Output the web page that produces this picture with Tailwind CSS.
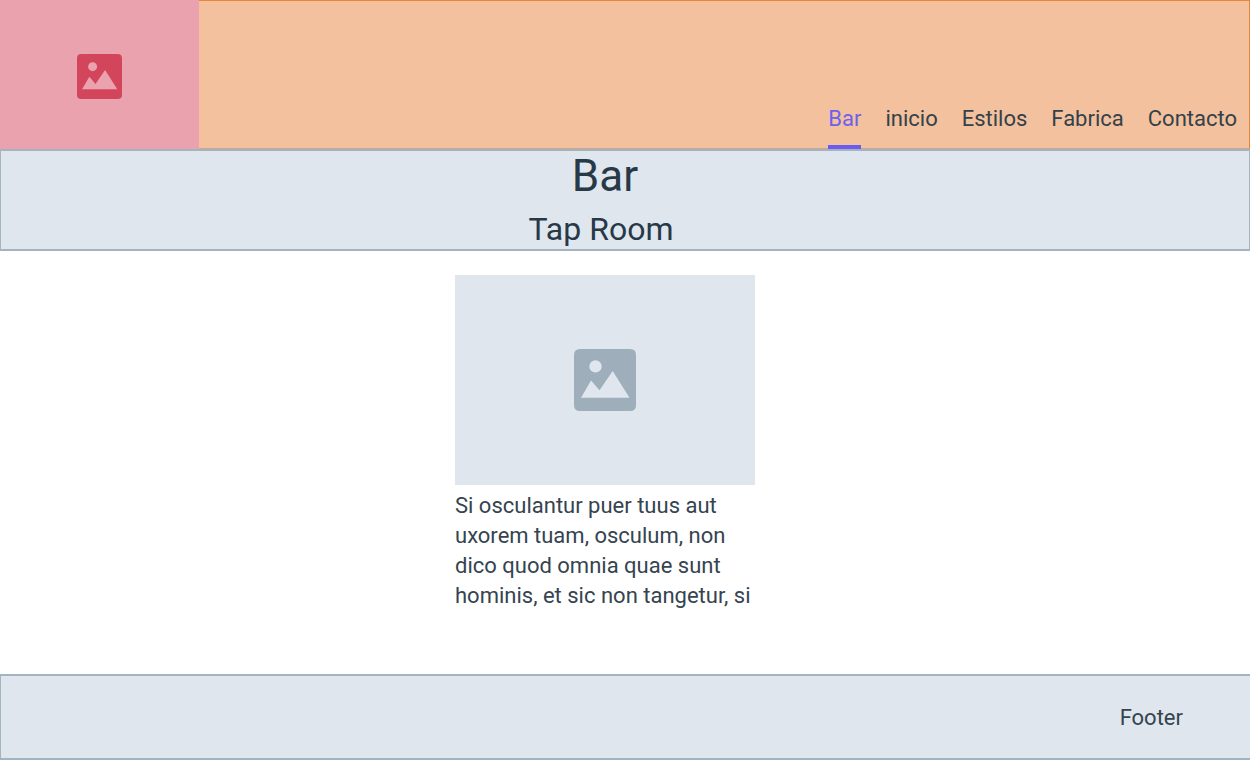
<!DOCTYPE html>
<html lang="es">
<head>
<meta charset="utf-8">
<meta name="viewport" content="width=device-width, initial-scale=1">
<title>Bar</title>
<script src="https://cdn.jsdelivr.net/npm/@tailwindcss/browser@4"></script>
</head>
<body class="flex min-h-screen flex-col bg-white font-['Roboto',sans-serif] text-[22px] leading-[30px] text-[#35444f]">
  <header class="flex h-[149px] bg-[#f3c19d]">
    <div class="flex w-[199px] shrink-0 items-center justify-center bg-[#e9a2ae] pt-1 text-[#d3455b]">
      <svg class="size-[45px]" viewBox="0 0 62 62" fill="currentColor" role="img" aria-label="Logo">
        <path fill-rule="evenodd" d="M6 0H56Q62 0 62 6V56Q62 62 56 62H6Q0 62 0 56V6Q0 0 6 0ZM21.500 11.200a6.200 6.200 0 1 0 0 12.400a6.200 6.200 0 1 0 0-12.400ZM7 48.700H55.500L38.700 22L25.500 41.300L17 31.500Z"/>
      </svg>
    </div>
    <nav class="flex flex-1 items-end justify-end gap-6 border-t border-r border-b border-t-[#ea8536] border-r-[#ea8536] border-b-[#d3a383] pr-3 text-[#33414a]">
      <a href="#bar" aria-current="page" class="-mb-px border-b-4 border-[#6a5bf3] pb-[11px] text-[#6f61ee]">Bar</a>
      <a href="#inicio" class="pb-3.5">inicio</a>
      <a href="#estilos" class="pb-3.5">Estilos</a>
      <a href="#fabrica" class="pb-3.5">Fabrica</a>
      <a href="#contacto" class="pb-3.5">Contacto</a>
    </nav>
  </header>
  <section class="flex h-[102px] flex-col items-center border-x border-y-2 border-[#a4b3c0] bg-[#dfe6ee] text-[#273947]">
    <h1 class="pr-10 text-[44px] leading-[50px]">Bar</h1>
    <p class="pr-12 text-[32px] leading-[56px]">Tap Room</p>
  </section>
  <main class="flex flex-1 justify-center pt-6 pr-10 pb-[63px]">
    <article class="w-[300px]">
      <div class="flex h-[210px] items-center justify-center bg-[#dfe6ee] text-[#9eaeba]">
        <svg class="size-[62px]" viewBox="0 0 62 62" fill="currentColor" role="img" aria-label="Imagen">
          <path fill-rule="evenodd" d="M6 0H56Q62 0 62 6V56Q62 62 56 62H6Q0 62 0 56V6Q0 0 6 0ZM21.500 11.200a6.200 6.200 0 1 0 0 12.400a6.200 6.200 0 1 0 0-12.400ZM7 48.700H55.500L38.700 22L25.500 41.300L17 31.500Z"/>
        </svg>
      </div>
      <p class="pt-1.5">Si osculantur puer tuus aut<br>uxorem tuam, osculum, non<br>dico quod omnia quae sunt<br>hominis, et sic non tangetur, si</p>
    </article>
  </main>
  <footer class="flex h-[86px] items-center justify-end border-y-2 border-l border-[#a4b3c0] bg-[#dfe6ee] pt-0.5 pr-[67px]">Footer</footer>
</body>
</html>
